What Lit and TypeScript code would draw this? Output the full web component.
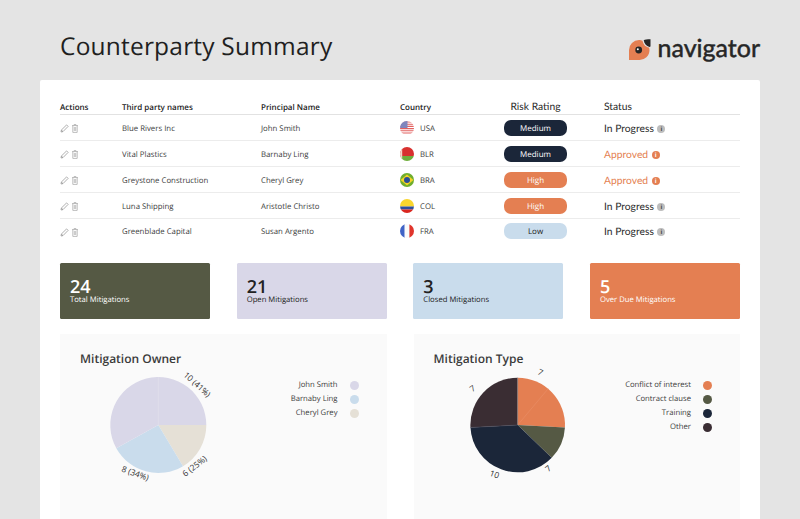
import { LitElement, html, css, svg } from "lit";
import { customElement } from "lit/decorators.js";

const NAVY = "#1b2639";
const ORANGE = "#e47f52";
const OLIVE = "#555944";
const BROWN = "#3a2d33";
const LAV = "#d9d7e8";
const BLUE = "#c9dcec";
const BEIGE = "#e5e0d6";

const rows = [
  ["Blue Rivers Inc", "John Smith", "USA", "Medium", "In Progress"],
  ["Vital Plastics", "Barnaby Ling", "BLR", "Medium", "Approved"],
  ["Greystone Construction", "Cheryl Grey", "BRA", "High", "Approved"],
  ["Luna Shipping", "Aristotle Christo", "COL", "High", "In Progress"],
  ["Greenblade Capital", "Susan Argento", "FRA", "Low", "In Progress"],
];

const flags: Record<string, unknown> = {
  USA: svg`<rect width="14" height="14" fill="#fff"/>
    <path d="M0 1h14M0 3.2h14M0 5.4h14M0 7.6h14M0 9.8h14M0 12h14" stroke="#e2605f" stroke-width="1.1"/>
    <rect width="7.5" height="7" fill="#7f86bd"/>`,
  BLR: svg`<rect width="14" height="9" fill="#d8312f"/><rect y="9" width="14" height="5" fill="#6fae3c"/>
    <rect width="2.2" height="14" fill="#f3d6c8"/>`,
  BRA: svg`<rect width="14" height="14" fill="#6fae2e"/><path d="M7 1.5 13.5 7 7 12.5.5 7z" fill="#f5d327"/>
    <circle cx="7" cy="7" r="3" fill="#2a4f96"/>`,
  COL: svg`<rect width="14" height="7.5" fill="#f9d52e"/><rect y="7.5" width="14" height="3" fill="#2d4f9e"/>
    <rect y="10.5" width="14" height="3.5" fill="#d9261f"/>`,
  FRA: svg`<rect width="4.7" height="14" fill="#3f63c6"/><rect x="4.7" width="4.7" height="14" fill="#fafafa"/>
    <rect x="9.4" width="4.6" height="14" fill="#e0352c"/>`,
};

const riskClass: Record<string, string> = { Medium: "medium", High: "high", Low: "low" };

type Slice = { from: number; to: number; color: string };
type Label = { x: number; y: number; r: number; t: string };

function point(cx: number, cy: number, r: number, deg: number) {
  const a = (deg * Math.PI) / 180;
  return `${(cx + r * Math.cos(a)).toFixed(2)} ${(cy + r * Math.sin(a)).toFixed(2)}`;
}

function pie(cx: number, cy: number, r: number, slices: Slice[], labels: Label[], seams: { deg: number; color: string }[]) {
  return html`<svg class="pie" viewBox="0 0 160 130" width="160" height="130">
    ${slices.map((s) => {
      const large = s.to - s.from > 180 ? 1 : 0;
      return svg`<path fill=${s.color} d="M${cx} ${cy}L${point(cx, cy, r, s.from)}A${r} ${r} 0 ${large} 1 ${point(cx, cy, r, s.to)}Z"/>`;
    })}
    ${seams.map((s) => svg`<line x1=${cx} y1=${cy} x2=${point(cx, cy, r, s.deg).split(" ")[0]} y2=${point(cx, cy, r, s.deg).split(" ")[1]} stroke=${s.color} stroke-width="0.6"/>`)}
    ${labels.map(
      (l) => svg`<text class="pie-label" text-anchor="middle" dominant-baseline="middle" transform="translate(${l.x} ${l.y}) rotate(${l.r})">${l.t}</text>`,
    )}
  </svg>`;
}

@customElement("app-root")
export class AppRoot extends LitElement {
  static styles = css`
    :host {
      display: flex;
      flex-direction: column;
      height: 519px;
      overflow: hidden;
      background: #e4e4e4;
      font-family: "Open Sans", sans-serif;
      color: #222;
      text-rendering: geometricPrecision;
    }
    .top {
      height: 80px;
      flex: none;
      box-sizing: border-box;
      padding: 0 40px 0 60px;
      display: flex;
      align-items: center;
      justify-content: space-between;
    }
    h1 {
      margin: 14px 0 0;
      font-size: 24.5px;
      font-weight: 400;
      line-height: 32px;
      color: #1f1f1f;
      letter-spacing: 0.2px;
    }
    .logo {
      display: flex;
      align-items: center;
      gap: 7px;
      margin-top: 20px;
    }
    .logo-text {
      font-family: Lato, sans-serif;
      font-size: 25px;
      line-height: 24px;
      font-weight: 400;
      -webkit-text-stroke: 0.5px #262626;
      color: #262626;
      margin-top: -5px;
    }
    .card {
      flex: 1;
      background: #fff;
      margin: 0 40px;
      padding: 18px 20px 0;
      border-radius: 2px 2px 0 0;
      display: flex;
      flex-direction: column;
      min-height: 0;
    }
    .row {
      display: grid;
      grid-template-columns: 62px 139px 139px 104px 100px 1fr;
      align-items: center;
      height: 26px;
      box-sizing: border-box;
      border-bottom: 1px solid #ececec;
      font-size: 7.8px;
      color: #3c3c3c;
    }
    .row > div:not(.pill) {
      padding-top: 2px;
    }
    .row:last-child {
      border-bottom: none;
      height: 24px;
    }
    .head {
      height: 17px;
      border-bottom: 1.5px solid #e2e2e2;
      font-weight: 600;
      color: #222;
      font-size: 8px;
    }
    .alt {
      font-family: Lato, sans-serif;
      font-weight: 400;
      font-size: 10.3px;
      color: #2a2a2a;
    }
    .risk-head {
      width: 63px;
      text-align: center;
      white-space: nowrap;
    }
    .risk-head span {
      display: inline-block;
      margin: 0 -10px;
    }
    .actions {
      display: flex;
      gap: 2px;
      align-items: center;
    }
    .country {
      display: flex;
      align-items: center;
      gap: 6px;
    }
    .flag {
      border-radius: 50%;
      display: block;
      margin-top: -2px;
    }
    .pill {
      width: 63px;
      height: 16px;
      box-sizing: border-box;
      padding-top: 1px;
      border-radius: 7px;
      display: flex;
      align-items: center;
      justify-content: center;
      font-weight: 500;
      font-size: 8px;
      line-height: 15px;
    }
    .medium {
      background: #1b2639;
      color: #fff;
    }
    .high {
      background: #e47f52;
      color: #fff;
    }
    .low {
      background: #c9dcec;
      color: #222;
    }
    .status {
      display: flex;
      align-items: center;
      gap: 3.5px;
    }
    .status.approved {
      color: #e47f52;
    }
    .info {
      width: 8px;
      height: 8px;
      border-radius: 50%;
      background: #bdbdbd;
      color: #444;
      font-size: 6px;
      line-height: 8px;
      text-align: center;
      font-weight: 700;
      font-family: "Open Sans", sans-serif;
    }
    .approved .info {
      background: #e47f52;
      color: #fff;
    }
    .stats {
      display: grid;
      grid-template-columns: repeat(4, 1fr);
      gap: 26.67px;
      margin-top: 20px;
    }
    .stat {
      height: 56px;
      box-sizing: border-box;
      border-radius: 1.5px;
      padding: 16px 10px 0;
    }
    .stat b {
      display: block;
      font-size: 18px;
      line-height: 16px;
      font-weight: 600;
    }
    .stat span {
      display: block;
      font-size: 7.7px;
      line-height: 10px;
    }
    .s-olive { background: #555944; color: #fff; }
    .s-lav { background: #d9d7e8; color: #222; }
    .s-blue { background: #c9dcec; color: #222; }
    .s-orange { background: #e47f52; color: #fff; }
    .panels {
      flex: 1;
      display: grid;
      grid-template-columns: 1fr 1fr;
      gap: 27px;
      margin-top: 15px;
      min-height: 0;
    }
    .panel {
      background: #fafafa;
      padding: 16px 28px 0 20px;
    }
    h2 {
      margin: 0 0 1px;
      font-size: 12px;
      line-height: 18px;
      font-weight: 600;
      color: #3a3a3a;
    }
    .chart {
      display: flex;
      justify-content: space-between;
      align-items: flex-start;
    }
    .pie {
      display: block;
      overflow: visible;
    }
    .pie-label {
      font-family: "Open Sans", sans-serif;
      font-size: 8.3px;
      fill: #333;
    }
    .legend {
      margin-top: 9px;
      display: flex;
      flex-direction: column;
    }
    .legend div {
      height: 14px;
      display: flex;
      align-items: center;
      justify-content: flex-end;
      gap: 12px;
      font-size: 7.7px;
      color: #3c3c3c;
    }
    .legend i {
      width: 9px;
      height: 9px;
      border-radius: 50%;
      display: block;
    }
  `;

  render() {
    const pencil = html`<svg width="9" height="9" viewBox="0 0 9 9" fill="none" stroke="#8c8c8c" stroke-width="0.7">
      <path d="M1 8 1.4 6 6.6.9 8.1 2.4 3 7.6Z" /><path d="M1.4 6 3 7.6" />
    </svg>`;
    const trash = html`<svg width="8" height="9" viewBox="0 0 8 9" fill="none" stroke="#a4a4a4" stroke-width="0.7">
      <path d="M1 1.6h6M3 1.5V.6h2v.9M1.8 1.6v6.8h4.4V1.6M3.3 3v4M4.7 3v4" />
    </svg>`;
    const legend = (items: [string, string][]) => html`<div class="legend">
      ${items.map(([t, c]) => html`<div>${t}<i style="background:${c}"></i></div>`)}
    </div>`;
    return html`
      <div class="top">
        <h1>Counterparty Summary</h1>
        <div class="logo">
          <svg width="22" height="22" viewBox="0 0 22 22">
            <path fill=${ORANGE} d="M0 21V11A10 10 0 0 1 10 1C11.5 1 12.5 1.2 13.5 1.7 14.5 5.5 16 7.5 20 8.5 20.3 9.3 20.5 10 20.5 11A10 10 0 0 1 10 21Z" />
            <path fill="#262626" d="M21.5 .3V7C21.5 7.5 21 8 20.6 7.9 17 7 15.5 5 14.7 1.3 16 .6 18 .3 21.5 .3Z" />
            <circle cx="9.7" cy="11" r="3.4" fill="#262626" />
            <circle cx="8.8" cy="10.2" r="1" fill="#fff" />
          </svg>
          <span class="logo-text">navigator</span>
        </div>
      </div>
      <div class="card">
        <div class="table">
          <div class="row head">
            <div>Actions</div>
            <div>Third party names</div>
            <div>Principal Name</div>
            <div>Country</div>
            <div class="alt risk-head"><span>Risk Rating</span></div>
            <div class="alt">Status</div>
          </div>
          ${rows.map(
            (r) => html`<div class="row">
              <div class="actions">${pencil}${trash}</div>
              <div>${r[0]}</div>
              <div>${r[1]}</div>
              <div class="country">
                <svg class="flag" width="14" height="14" viewBox="0 0 14 14">${flags[r[2]]}</svg>${r[2]}
              </div>
              <div class="pill ${riskClass[r[3]]}">${r[3]}</div>
              <div class="alt status ${r[4] === "Approved" ? "approved" : ""}">${r[4]}<span class="info">i</span></div>
            </div>`,
          )}
        </div>
        <div class="stats">
          <div class="stat s-olive"><b>24</b><span>Total Mitigations</span></div>
          <div class="stat s-lav"><b>21</b><span>Open Mitigations</span></div>
          <div class="stat s-blue"><b>3</b><span>Closed Mitigations</span></div>
          <div class="stat s-orange"><b>5</b><span>Over Due Mitigations</span></div>
        </div>
        <div class="panels">
          <div class="panel">
            <h2>Mitigation Owner</h2>
            <div class="chart">
              ${pie(
                78.3,
                56,
                48,
                [
                  { from: 0, to: 59, color: BEIGE },
                  { from: 59, to: 151, color: BLUE },
                  { from: 151, to: 360, color: LAV },
                ],
                [
                  { x: 116.7, y: 16, r: 42, t: "10 (41%)" },
                  { x: 55, y: 105, r: 20, t: "8 (34%)" },
                  { x: 115, y: 97.7, r: -38, t: "6 (25%)" },
                ],
                [{ deg: 270, color: "#e2e0ed" }],
              )}
              ${legend([
                ["John Smith", LAV],
                ["Barnaby Ling", BLUE],
                ["Cheryl Grey", BEIGE],
              ])}
            </div>
          </div>
          <div class="panel">
            <h2>Mitigation Type</h2>
            <div class="chart">
              ${pie(
                83.7,
                56,
                47.3,
                [
                  { from: 270, to: 363, color: ORANGE },
                  { from: 3, to: 44, color: OLIVE },
                  { from: 44, to: 177, color: NAVY },
                  { from: 177, to: 270, color: BROWN },
                ],
                [
                  { x: 106, y: 4, r: 25, t: "7" },
                  { x: 39, y: 20, r: -35, t: "7" },
                  { x: 114.7, y: 100, r: -40, t: "7" },
                  { x: 60.3, y: 106, r: 20, t: "10" },
                ],
                [
                  { deg: 310, color: "#e98f68" },
                  { deg: 270, color: "#a58f8c" },
                  { deg: 177, color: "#4a4c5c" },
                ],
              )}
              ${legend([
                ["Conflict of interest", ORANGE],
                ["Contract clause", OLIVE],
                ["Training", NAVY],
                ["Other", BROWN],
              ])}
            </div>
          </div>
        </div>
      </div>
    `;
  }
}
